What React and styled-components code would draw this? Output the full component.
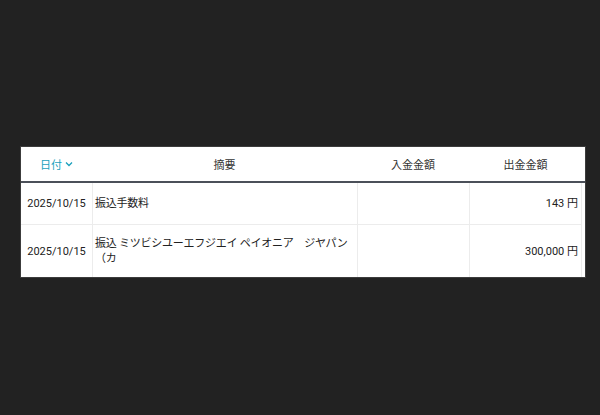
import React from "react";
import styled, { createGlobalStyle } from "styled-components";

const GlobalStyle = createGlobalStyle`
  html, body {
    margin: 0;
    padding: 0;
    background: #222222;
  }
  body {
    font-family: Roboto, "Noto Sans CJK JP", sans-serif;
  }
`;

const Page = styled.div`
  width: 600px;
  height: 415px;
  box-sizing: border-box;
  padding: 146px 14px 0 20px;
  background: #222222;
`;

const Table = styled.div`
  background: #ffffff;
  border: 1px solid #3c3c3c;
  padding-right: 3px;
  font-size: 11px;
  color: #222;
`;

const COLS = "71px 265px 112px 113px";

const HeaderRow = styled.div`
  display: grid;
  grid-template-columns: ${COLS};
  height: 34px;
  margin-right: -3px;
  border-bottom: 2px solid #4b5059;
  padding-right: 3px;
`;

const HeadCell = styled.div`
  display: flex;
  align-items: center;
  justify-content: center;
  gap: 3px;
  color: ${({ $active }) => ($active ? "#1a9fbc" : "#333")};
`;

const Row = styled.div`
  display: grid;
  grid-template-columns: ${COLS};
  min-height: ${({ $h }) => $h}px;
  & + & {
    border-top: 1px solid #ececec;
  }
`;

const Cell = styled.div`
  display: flex;
  align-items: center;
  box-sizing: border-box;
  padding: 0 ${({ $pr }) => $pr ?? 4}px 0 ${({ $pl }) => $pl ?? 4}px;
  justify-content: ${({ $align }) => $align || "flex-start"};
  border-left: ${({ $first }) => ($first ? "none" : "1px solid #ececec")};
  line-height: 15px;
  &:last-child {
    border-right: 1px solid #ececec;
  }
`;

const Memo = styled(Cell)`
  letter-spacing: -0.25px;
`;

const Chevron = () => (
  <svg width="8" height="6" viewBox="0 0 8 6" fill="none">
    <path d="M1 1.5 L4 4.5 L7 1.5" stroke="#1a9fbc" strokeWidth="1.3" />
  </svg>
);

const rows = [
  { date: "2025/10/15", memo: "振込手数料", deposit: "", withdraw: "143 円", h: 41 },
  {
    date: "2025/10/15",
    memo: "振込 ミツビシユーエフジエイ ペイオニア　ジヤパン　（カ",
    deposit: "",
    withdraw: "300,000 円",
    h: 52,
  },
];

export default function App() {
  return (
    <>
      <GlobalStyle />
      <Page>
        <Table>
          <HeaderRow>
            <HeadCell $active>
              日付 <Chevron />
            </HeadCell>
            <HeadCell>摘要</HeadCell>
            <HeadCell>入金金額</HeadCell>
            <HeadCell>出金金額</HeadCell>
          </HeaderRow>
          {rows.map((r, i) => (
            <Row key={i} $h={r.h}>
              <Cell $first $align="center" $pl={0} $pr={0}>
                {r.date}
              </Cell>
              <Memo $pl={2} $pr={4}>{r.memo}</Memo>
              <Cell $align="flex-end">{r.deposit}</Cell>
              <Cell $align="flex-end" $pr={3}>
                {r.withdraw}
              </Cell>
            </Row>
          ))}
        </Table>
      </Page>
    </>
  );
}
